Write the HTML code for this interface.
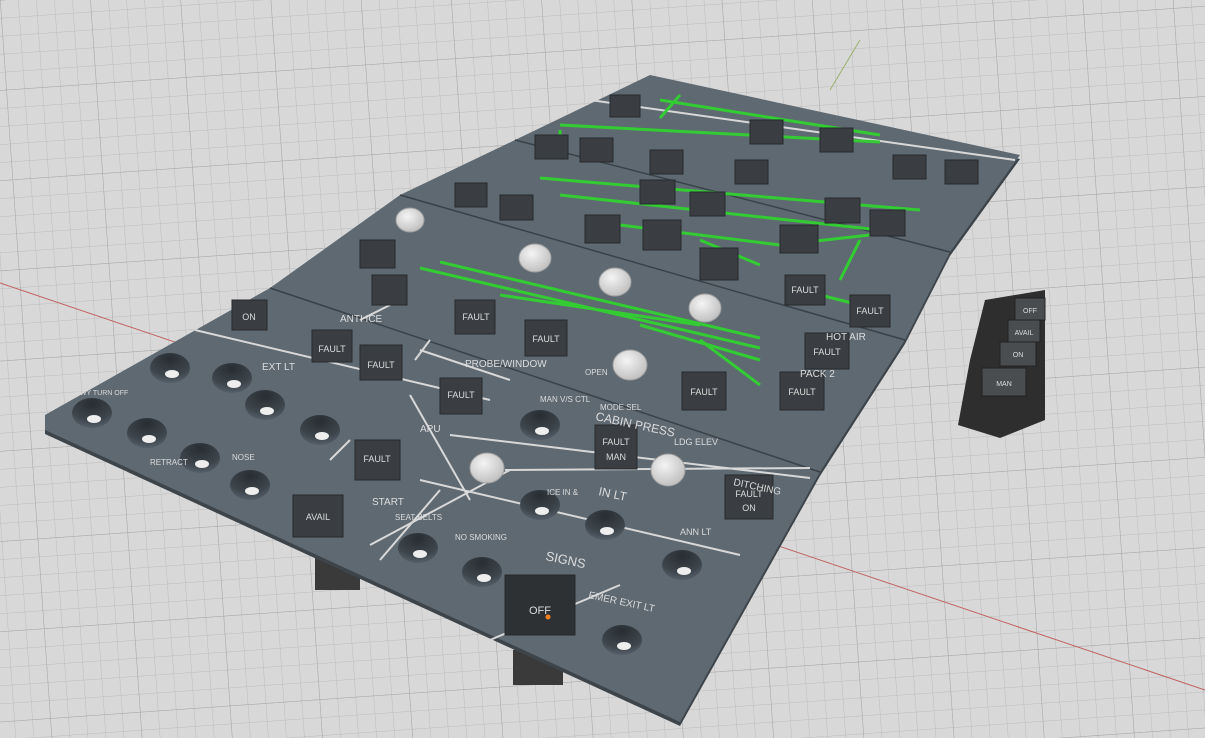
<!DOCTYPE html>
<html><head><meta charset="utf-8"><style>
html,body{margin:0;padding:0;background:#d6d6d6;overflow:hidden}
svg{display:block}
text{font-family:"Liberation Sans",sans-serif;fill:#dcdcdc}
</style></head><body>
<svg width="1205" height="738" viewBox="0 0 1205 738" xmlns="http://www.w3.org/2000/svg">
<defs>
<pattern id="g" width="18" height="18" patternUnits="userSpaceOnUse" patternTransform="rotate(-4)">
<rect width="18" height="18" fill="#d8d8d8"/><path d="M0 0 H18 M0 0 V18" stroke="#bcbcbc" stroke-width="1"/></pattern>
<pattern id="g2" width="90" height="90" patternUnits="userSpaceOnUse" patternTransform="rotate(-4)">
<path d="M0 0 H90 M0 0 V90" stroke="#a8a8a8" stroke-width="1" fill="none"/></pattern>
<radialGradient id="h" cx="0.5" cy="0.2" r="0.8"><stop offset="0" stop-color="#272d32"/><stop offset="0.7" stop-color="#3e464d"/><stop offset="1" stop-color="#56606a"/></radialGradient>
<radialGradient id="k" cx="0.4" cy="0.35" r="0.7"><stop offset="0" stop-color="#f4f4f4"/><stop offset="1" stop-color="#bdbdbd"/></radialGradient>
<g id="hole"><ellipse cx="0" cy="0" rx="20" ry="15" fill="url(#h)"/><ellipse cx="2" cy="6" rx="7" ry="4" fill="#eeeeee"/></g>
</defs>
<rect width="1205" height="738" fill="url(#g)"/>
<rect width="1205" height="738" fill="url(#g2)"/>
<path d="M0 283 L1205 690" stroke="#c06060" stroke-width="1"/>
<path d="M860 40 L830 90" stroke="#9ab070" stroke-width="1"/>
<!-- legs -->
<rect x="315" y="550" width="45" height="40" fill="#3a3a3a"/>
<rect x="513" y="650" width="50" height="35" fill="#3a3a3a"/>
<!-- side switches -->
<polygon points="985,300 1045,290 1045,420 1000,438 958,425 970,360" fill="#2e2e2e"/>
<g fill="#4a4d50" stroke="#222"><rect x="1015" y="298" width="30" height="22"/><rect x="1008" y="320" width="32" height="22"/><rect x="1000" y="342" width="36" height="24"/><rect x="982" y="368" width="44" height="28"/></g>
<g font-size="7" fill="#ccc" text-anchor="middle"><text x="1030" y="313">OFF</text><text x="1024" y="335">AVAIL</text><text x="1018" y="357">ON</text><text x="1004" y="386">MAN</text></g>
<!-- panel -->
<polygon points="650,75 1020,155 950,252 905,340 820,472 680,722 45,430 45,415 270,288 400,195 515,140" fill="#3d444a" transform="translate(0,4)"/>
<polygon points="650,75 1020,155 950,252 905,340 820,472 680,722 45,430 45,415 270,288 400,195 515,140" fill="#5e6972"/>
<g stroke="#3a4249" stroke-width="1.5">
<path d="M515 140 L950 252 M400 195 L905 340 M270 288 L820 472"/>
</g>
<g stroke="#d8d8d8" stroke-width="2" fill="none">
<path d="M590 100 L1015 160"/>
<path d="M195 330 L490 400 M360 320 L400 300 M420 350 L510 380 M410 395 L470 500 M370 545 L510 470 M505 470 L810 468"/>
<path d="M415 360 L430 340 M330 460 L350 440 M450 435 L810 478 M420 480 L740 555 M490 640 L620 585 M380 560 L440 490"/>
</g>
<!-- green lines -->
<g stroke="#33cc33" stroke-width="3" fill="none">
<path d="M660 100 L880 135 M680 95 L660 118 M560 125 L880 142 M560 130 L560 140"/>
<path d="M540 178 L920 210 M560 195 L880 230 M620 225 L780 245 M780 245 L870 235 M700 240 L760 265"/>
<path d="M420 268 L760 348 M440 262 L760 338 M500 295 L700 325 M700 340 L760 385 M640 325 L760 360"/>
<path d="M860 240 L840 280 M820 295 L860 305"/>
</g>
<!-- buttons -->
<g fill="#3a3e42" stroke="#26292c">
<rect x="232" y="300" width="35" height="30"/><rect x="312" y="330" width="40" height="32"/><rect x="360" y="345" width="42" height="35"/>
<rect x="440" y="378" width="42" height="36"/><rect x="455" y="300" width="40" height="34"/><rect x="525" y="320" width="42" height="36"/>
<rect x="595" y="425" width="42" height="44"/><rect x="355" y="440" width="45" height="40"/><rect x="293" y="495" width="50" height="42"/>
<rect x="682" y="372" width="44" height="38"/><rect x="725" y="475" width="48" height="44"/><rect x="780" y="372" width="44" height="38"/>
<rect x="805" y="333" width="44" height="36"/><rect x="785" y="275" width="40" height="30"/><rect x="850" y="295" width="40" height="32"/>
<rect x="372" y="275" width="35" height="30"/><rect x="360" y="240" width="35" height="28"/><rect x="585" y="215" width="35" height="28"/>
<rect x="700" y="248" width="38" height="32"/><rect x="643" y="220" width="38" height="30"/><rect x="780" y="225" width="38" height="28"/>
<rect x="825" y="198" width="35" height="25"/><rect x="870" y="210" width="35" height="26"/><rect x="640" y="180" width="35" height="24"/>
<rect x="690" y="192" width="35" height="24"/><rect x="500" y="195" width="33" height="25"/><rect x="455" y="183" width="32" height="24"/>
<rect x="535" y="135" width="33" height="24"/><rect x="580" y="138" width="33" height="24"/><rect x="650" y="150" width="33" height="24"/>
<rect x="735" y="160" width="33" height="24"/><rect x="820" y="128" width="33" height="24"/><rect x="893" y="155" width="33" height="24"/>
<rect x="945" y="160" width="33" height="24"/><rect x="610" y="95" width="30" height="22"/><rect x="750" y="120" width="33" height="24"/>
<rect x="505" y="575" width="70" height="60" fill="#2e3134"/>
</g>
<g font-size="9" text-anchor="middle">
<text x="249" y="320">ON</text><text x="332" y="352">FAULT</text><text x="381" y="368">FAULT</text><text x="461" y="398">FAULT</text>
<text x="616" y="445">FAULT</text><text x="616" y="460">MAN</text><text x="377" y="462">FAULT</text><text x="318" y="520">AVAIL</text><text x="704" y="395">FAULT</text>
<text x="749" y="497">FAULT</text><text x="749" y="511">ON</text><text x="802" y="395">FAULT</text><text x="827" y="355">FAULT</text><text x="540" y="614" font-size="11">OFF</text>
<text x="476" y="320">FAULT</text><text x="546" y="342">FAULT</text><text x="805" y="293">FAULT</text><text x="870" y="314">FAULT</text>
</g>
<circle cx="548" cy="617" r="2.5" fill="#f08020"/>
<!-- knobs -->
<g fill="url(#k)" stroke="#a0a0a0"><ellipse cx="410" cy="220" rx="14" ry="12"/><ellipse cx="535" cy="258" rx="16" ry="14"/><ellipse cx="615" cy="282" rx="16" ry="14"/><ellipse cx="705" cy="308" rx="16" ry="14"/><ellipse cx="630" cy="365" rx="17" ry="15"/><ellipse cx="487" cy="468" rx="17" ry="15"/><ellipse cx="668" cy="470" rx="17" ry="16"/></g>
<!-- holes -->
<use href="#hole" x="170" y="368" transform="translate(0,0)"/>
<use href="#hole" x="232" y="378"/><use href="#hole" x="92" y="413"/><use href="#hole" x="147" y="433"/>
<use href="#hole" x="265" y="405"/><use href="#hole" x="320" y="430"/><use href="#hole" x="200" y="458"/><use href="#hole" x="250" y="485"/>
<use href="#hole" x="540" y="425"/><use href="#hole" x="540" y="505"/><use href="#hole" x="605" y="525"/><use href="#hole" x="418" y="548"/>
<use href="#hole" x="482" y="572"/><use href="#hole" x="682" y="565"/><use href="#hole" x="622" y="640"/>
<g font-size="10">
<text x="340" y="322">ANTI ICE</text><text x="262" y="370">EXT LT</text><text x="420" y="432">APU</text><text x="595" y="420" font-size="12" transform="rotate(12 595 420)">CABIN PRESS</text>
<text x="598" y="495" font-size="12" transform="rotate(12 598 495)">IN LT</text><text x="545" y="560" font-size="13" transform="rotate(12 545 560)">SIGNS</text><text x="588" y="598" transform="rotate(12 588 598)">EMER EXIT LT</text>
<text x="733" y="485" transform="rotate(12 733 485)">DITCHING</text><text x="826" y="340">HOT AIR</text><text x="800" y="377">PACK 2</text><text x="372" y="505">START</text>
<text x="465" y="367">PROBE/WINDOW</text><text x="540" y="402" font-size="8">MAN V/S CTL</text><text x="600" y="410" font-size="8">MODE SEL</text>
<text x="674" y="445" font-size="9">LDG ELEV</text><text x="547" y="495" font-size="8">ICE IN &amp;</text><text x="680" y="535" font-size="9">ANN LT</text>
<text x="395" y="520" font-size="8">SEAT BELTS</text><text x="455" y="540" font-size="8">NO SMOKING</text><text x="585" y="375" font-size="8">OPEN</text>
<text x="75" y="395" font-size="7">RWY TURN OFF</text><text x="232" y="460" font-size="8">NOSE</text><text x="150" y="465" font-size="8">RETRACT</text>
</g>
</svg>
</body></html>
